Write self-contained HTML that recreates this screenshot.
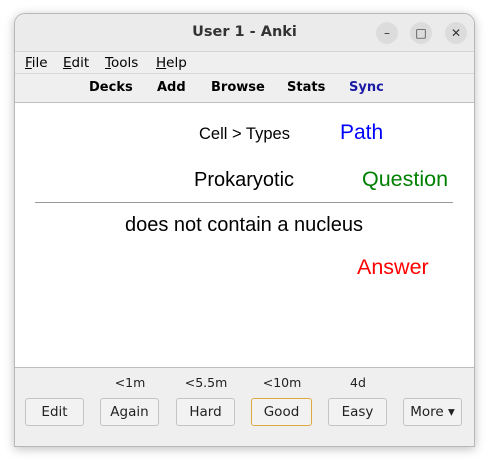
<!DOCTYPE html>
<html><head><style>
body{margin:0;width:488px;height:460px;background:#fff;position:relative;overflow:hidden;font-family:"DejaVu Sans","Liberation Sans",sans-serif}
.win{position:absolute;left:14px;top:13px;width:459px;height:432px;border:1px solid #b8b8b8;border-radius:11px 11px 0 0;background:#efefef;box-shadow:0 2px 10px rgba(0,0,0,.25);overflow:hidden}
.title{position:absolute;left:0;top:0;width:459px;height:37px;background:#ebebeb;border-bottom:1px solid #d6d6d6;text-align:center;line-height:37px;font-weight:bold;font-size:14.5px;color:#333}
.cb{position:absolute;top:8px;width:22px;height:22px;border-radius:50%;background:#dcdcdc;text-align:center;line-height:22px;font-size:12px;color:#333;font-weight:normal}
.menu{position:absolute;top:38px;left:0;width:459px;height:21px;border-bottom:1px solid #d8d8d8;font-size:13.5px;line-height:21px}
.menu span{position:absolute;top:1px}
.tb{position:absolute;top:60px;left:0;width:459px;height:28px;border-bottom:1px solid #bdbdbd;font-size:13px;font-weight:bold;line-height:28px}
.tb span{position:absolute}
.content{position:absolute;top:89px;left:0;width:459px;height:264px;background:#fff;border-bottom:1px solid #bdbdbd;font-family:"Liberation Sans",sans-serif}
.t{position:absolute;white-space:nowrap}
.btn{position:absolute;top:384px;width:57px;height:26px;border:1px solid #c4c4c4;border-radius:3px;background:#f2f2f2;text-align:center;line-height:26px;font-size:13.5px;color:#222}
.lab{position:absolute;top:361px;font-size:12.5px;color:#222;width:60px;text-align:center}
</style></head><body>
<div class="win">
<div class="title">User 1 - Anki
<div class="cb" style="left:361px">–</div><div class="cb" style="left:395px">□</div><div class="cb" style="left:430px">✕</div></div>
<div class="menu"><span style="left:10px"><u>F</u>ile</span><span style="left:48px"><u>E</u>dit</span><span style="left:90px"><u>T</u>ools</span><span style="left:141px"><u>H</u>elp</span></div>
<div class="tb"><span style="left:74px">Decks</span><span style="left:142px">Add</span><span style="left:196px">Browse</span><span style="left:272px">Stats</span><span style="left:334px;color:#1a1aa6">Sync</span></div>
<div class="content">
<div class="t" style="left:184px;top:22px;font-size:16.5px">Cell &gt; Types</div>
<div class="t" style="left:325px;top:18px;font-size:21px;color:#0000ff">Path</div>
<div class="t" style="left:179px;top:66px;font-size:20px">Prokaryotic</div>
<div class="t" style="left:347px;top:64px;font-size:21.5px;color:#008000">Question</div>
<div style="position:absolute;left:20px;top:99px;width:418px;height:1px;background:#999"></div>
<div class="t" style="left:110px;top:111px;font-size:20px">does not contain a nucleus</div>
<div class="t" style="left:342px;top:152px;font-size:21.5px;color:#ff0000">Answer</div>
</div>
<div class="lab" style="left:85px">&lt;1m</div>
<div class="lab" style="left:161px">&lt;5.5m</div>
<div class="lab" style="left:237px">&lt;10m</div>
<div class="lab" style="left:313px">4d</div>
<div class="btn" style="left:10px">Edit</div>
<div class="btn" style="left:85px">Again</div>
<div class="btn" style="left:161px">Hard</div>
<div class="btn" style="left:236px;width:59px;border-color:#e0a840">Good</div>
<div class="btn" style="left:313px">Easy</div>
<div class="btn" style="left:388px">More ▾</div>
</div>
</body></html>
